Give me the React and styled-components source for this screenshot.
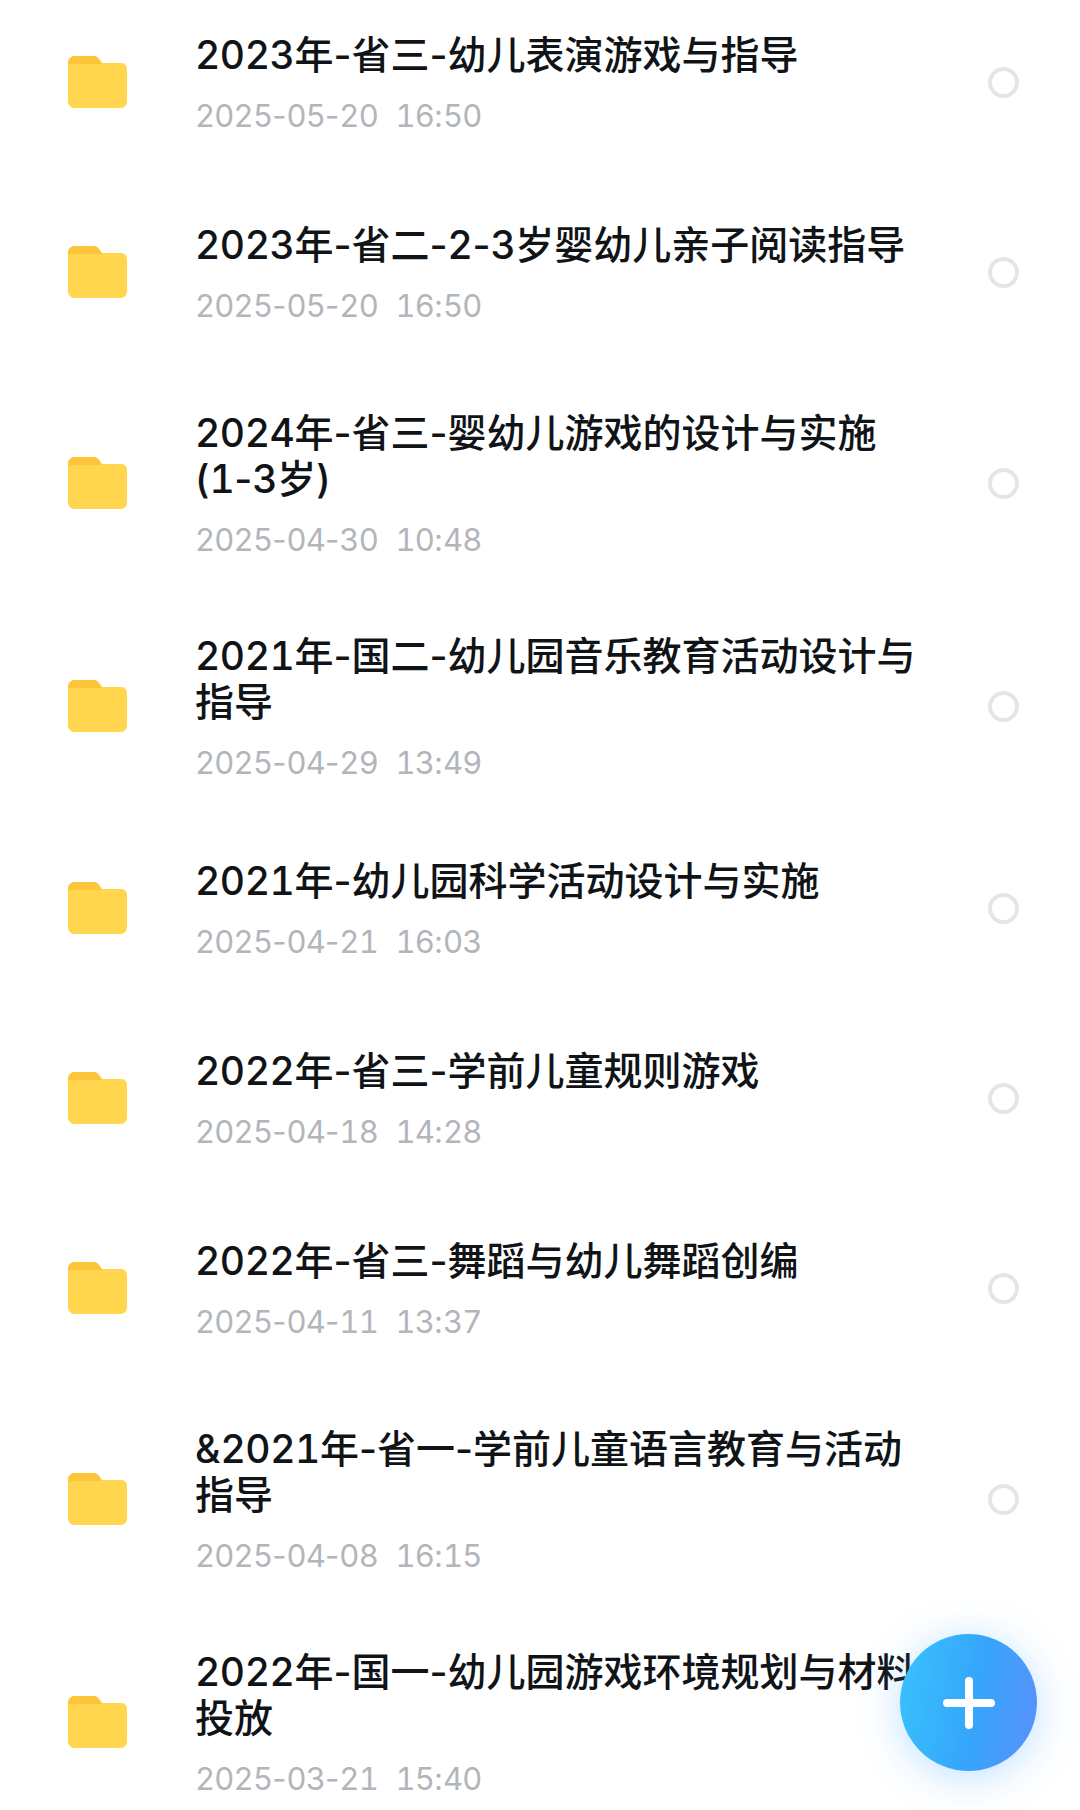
import React from "react";
import styled, { createGlobalStyle } from "styled-components";

const Global = createGlobalStyle`
  html, body { margin: 0; padding: 0; background: #fff; }
  #root { width: 1080px; height: 1810px; overflow: hidden; position: relative; }
`;

const Page = styled.div`
  width: 1080px;
  height: 1810px;
  position: relative;
  overflow: hidden;
  background: #fff;
  font-family: "Inter", "Noto Sans CJK SC", sans-serif;
`;

const List = styled.ul`
  list-style: none;
  margin: -13px 0 0;
  padding: 0;
`;

const Row = styled.li`
  display: grid;
  grid-template-columns: 59px minmax(0, 1fr) 31px;
  align-items: center;
  column-gap: 68px;
  min-height: 190px;
  padding: ${(p) => (p.$double ? "42.5px 61px 33.5px 68px" : "38px 61px 38px 68px")};
  box-sizing: border-box;
`;

const Folder = styled.svg`
  display: block;
`;

const Info = styled.div`
  display: flex;
  flex-direction: column;
  gap: 20px;
  min-width: 0;
`;

const Title = styled.div`
  font-size: 39px;
  line-height: 46px;
  font-weight: 500;
  color: #111417;
  white-space: pre;
`;

const DateText = styled.div`
  font-size: 31px;
  line-height: 35px;
  color: #b2b6ba;
  white-space: pre;
`;

const Digits = styled.span`
  font-variant-numeric: tabular-nums;
  letter-spacing: ${(p) => p.$tracking};
`;

const Radio = styled.span`
  display: block;
  width: 31px;
  height: 31px;
  box-sizing: border-box;
  border: 4px solid #e4e5e6;
  border-radius: 50%;
`;

const Fab = styled.button`
  position: absolute;
  left: 900px;
  top: 1634px;
  width: 137px;
  height: 137px;
  padding: 0;
  border: 0;
  border-radius: 50%;
  background: linear-gradient(100deg, #38c3fd 0%, #36a5fb 55%, #5a90fb 100%);
  box-shadow: 0 6px 40px rgba(70, 170, 255, 0.35);
  display: flex;
  align-items: center;
  justify-content: center;
`;

function FolderIcon() {
  return (
    <Folder width="59" height="52" viewBox="0 0 59 52" aria-hidden="true">
      <path d="M0 7C0 3 3 0 7 0H25C28 0 29.500 1 31 3L34 7H53C56.500 7 59 9.500 59 13V45C59 49 56.500 52 53 52H6C3 52 0 49 0 45Z" fill="#ffd64d" />
      <path d="M0 7C0 3 3 0 7 0H25C28 0 29.500 1 31 3L34 8H3C1.500 8 0 9 0 10Z" fill="#fdc63a" />
    </Folder>
  );
}

function PlusIcon() {
  return (
    <svg width="52" height="52" viewBox="0 0 52 52" aria-hidden="true">
      <path d="M26 4V48M4 26H48" stroke="#fff" strokeWidth="8" strokeLinecap="round" fill="none" />
    </svg>
  );
}

function Numbered({ text, tracking }) {
  return text.split(/(\d+)/).map((part, i) =>
    /^\d+$/.test(part) ? (
      <Digits key={i} $tracking={tracking}>{part}</Digits>
    ) : (
      part
    )
  );
}

const items = [
  ["2023年-省三-幼儿表演游戏与指导", "2025-05-20  16:50"],
  ["2023年-省二-2-3岁婴幼儿亲子阅读指导", "2025-05-20  16:50"],
  ["2024年-省三-婴幼儿游戏的设计与实施\n(1-3岁)", "2025-04-30  10:48"],
  ["2021年-国二-幼儿园音乐教育活动设计与\n指导", "2025-04-29  13:49"],
  ["2021年-幼儿园科学活动设计与实施", "2025-04-21  16:03"],
  ["2022年-省三-学前儿童规则游戏", "2025-04-18  14:28"],
  ["2022年-省三-舞蹈与幼儿舞蹈创编", "2025-04-11  13:37"],
  ["&2021年-省一-学前儿童语言教育与活动\n指导", "2025-04-08  16:15"],
  ["2022年-国一-幼儿园游戏环境规划与材料\n投放", "2025-03-21  15:40"],
];

export default function App() {
  return (
    <Page>
      <Global />
      <List>
        {items.map(([title, date]) => (
          <Row key={title} $double={title.includes("\n")}>
            <FolderIcon />
            <Info>
              <Title><Numbered text={title} tracking="-0.4px" /></Title>
              <DateText><Numbered text={date} tracking="-0.8px" /></DateText>
            </Info>
            <Radio />
          </Row>
        ))}
      </List>
      <Fab aria-label="新建">
        <PlusIcon />
      </Fab>
    </Page>
  );
}
